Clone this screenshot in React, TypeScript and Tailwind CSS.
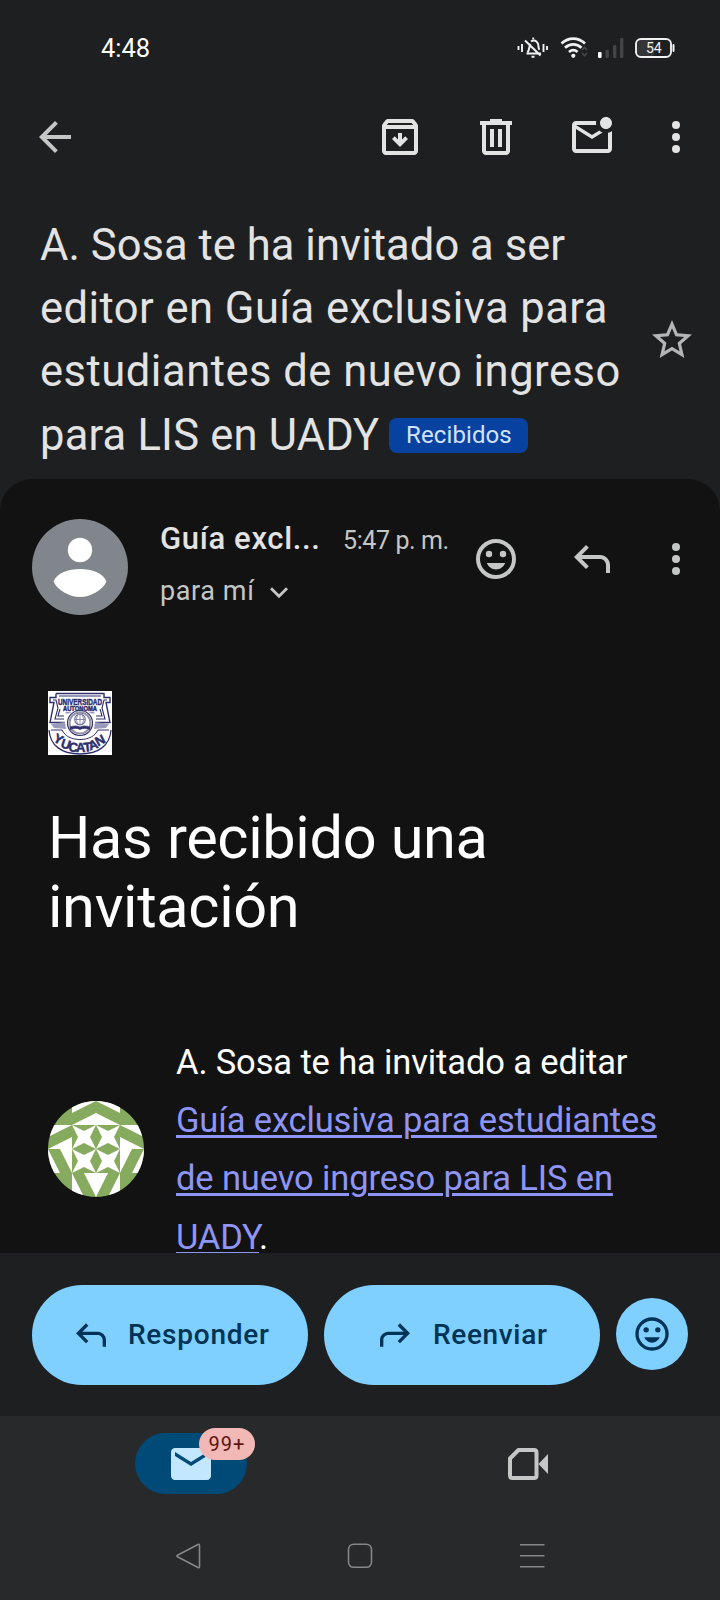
import React from "react";

type IconProps = { d?: string; className?: string; children?: React.ReactNode };

function Icon({ d, className = "size-12", children }: IconProps) {
  return (
    <svg viewBox="0 0 24 24" className={`shrink-0 ${className}`} fill="currentColor">
      {d ? <path d={d} fillRule="evenodd" /> : null}
      {children}
    </svg>
  );
}

const paths = {
  back: "M20 11H7.83l5.59-5.59L12 4l-8 8 8 8 1.410-1.410L7.830 13H20z",
  archive:
    "M20.54 5.23l-1.39-1.68C18.88 3.21 18.47 3 18 3H6c-.47 0-.88.21-1.16.55L3.46 5.23C3.17 5.57 3 6.02 3 6.5V19c0 1.1.9 2 2 2h14c1.1 0 2-.9 2-2V6.500c0-.48-.17-.93-.46-1.270zM6.240 5h11.520l.830 1H5.420l.820-1zM5 19V8h14v11H5zm6-9v3.200l-1.600-1.600L8 13l4 4 4-4-1.400-1.400-1.600 1.600V10z",
  trash:
    "M9 3v1H4v2h1v13c0 1.100.9 2 2 2h10c1.100 0 2-.9 2-2V6h1V4h-5V3H9zM7 6h10v13H7V6zm2 2v9h2V8H9zm4 0v9h2V8h-2z",
  unread:
    "M22 8.980V18c0 1.100-.9 2-2 2H4c-1.100 0-2-.9-2-2V6c0-1.100.9-2 2-2h10.100c-.06.320-.1.660-.1 1s.04.680.1 1H4l8 5 3.670-2.290c.470.430 1.020.760 1.630.980L12 13 4 8v10h16V9.900c.740-.150 1.420-.480 2-.920zM16 5c0 1.660 1.340 3 3 3s3-1.340 3-3-1.340-3-3-3-3 1.340-3 3z",
  star:
    "M22 9.240l-7.190-.620L12 2 9.190 8.630 2 9.240l5.460 4.730L5.820 21 12 17.270 18.180 21l-1.630-7.030L22 9.240zM12 15.400l-3.760 2.270 1-4.280-3.320-2.880 4.380-.380L12 6.100l1.710 4.040 4.380.380-3.320 2.880 1 4.280L12 15.400z",
  reply: "M19 19v-4c0-1.660-1.340-3-3-3H6.830l3.580 3.590L9 17l-6-6 6-6 1.410 1.410L6.830 10H16c2.760 0 5 2.240 5 5v4z",
  mail: "M20 4H4c-1.100 0-2 .9-2 2v12c0 1.100.9 2 2 2h16c1.100 0 2-.9 2-2V6c0-1.100-.9-2-2-2zm0 4l-8 5-8-5V6l8 5 8-5v2z",
};

function Dots() {
  return (
    <Icon>
      <circle cx="12" cy="6" r="2" />
      <circle cx="12" cy="12" r="2" />
      <circle cx="12" cy="18" r="2" />
    </Icon>
  );
}

function Smile({ className }: { className?: string }) {
  return (
    <Icon className={className}>
      <circle cx="12" cy="12" r="9" fill="none" stroke="currentColor" strokeWidth="2" />
      <circle cx="8.500" cy="9.500" r="1.600" />
      <circle cx="15.500" cy="9.500" r="1.600" />
      <path d="M7.400 14h9.200c-.7 1.900-2.500 3.200-4.600 3.200S8.100 15.900 7.400 14z" />
    </Icon>
  );
}

function StatusIcons() {
  return (
    <svg viewBox="0 0 166 28" className="h-7 w-[166px]" fill="none" stroke="#f1f1f1">
      <g strokeWidth="2">
        <path d="M2.500 12v4M6 10v8M27.500 10v8M31 12v4" strokeWidth="1.900" />
        <path d="M10.500 19.500h14.500M11.500 18.500c2-2 1.500-6.500 3-8.500M15 7.300c4.500-2.300 7.500 1 7.500 5 0 1.500.3 2.600.8 3.600M9 6.500l15.500 15" />
        <path d="M16.300 4.500h1.800M15.500 22.800h3" />
      </g>
      <g strokeWidth="2.800">
        <path d="M45.500 9.500c7-6.500 16.500-6.500 23.500 0" />
        <path d="M49 13.800c5-4.500 11.500-4.500 16.500 0" />
        <path d="M53 18c2.800-2.300 6-2.300 8.500 0" />
        <circle cx="57.300" cy="21.800" r="2.100" fill="#f1f1f1" stroke="none" />
      </g>
      <path d="M66 16l2.500-2.800 2.500 2.800M66 19l2.500 2.800 2.500-2.800" stroke="#4a4b4c" strokeWidth="1.400" />
      <g stroke="none">
        <rect x="82" y="18" width="3.600" height="6" rx="1" fill="#fff" />
        <rect x="89.500" y="16" width="3.400" height="8" rx="1" fill="#434445" />
        <rect x="97" y="11" width="3.400" height="13" rx="1" fill="#434445" />
        <rect x="104" y="4" width="3.400" height="20" rx="1" fill="#434445" />
        <rect x="120" y="5" width="18" height="18" rx="4" fill="#343536" />
        <rect x="156.500" y="10" width="2" height="8" rx="1" fill="#f1f1f1" />
      </g>
      <rect x="120" y="5" width="35" height="18" rx="5" strokeWidth="1.900" />
      <text x="130" y="18.800" fontFamily="Roboto, sans-serif" fontSize="14" textLength="15.500" fill="#f1f1f1" stroke="none">
        54
      </text>
    </svg>
  );
}

function UniversityCrest() {
  const navy = "#2f2f6d";
  return (
    <svg viewBox="0 0 64 64" className="size-16" fill="none" stroke={navy}>
      <rect width="64" height="64" fill="#fff" stroke="none" />
      <path d="M8 2.500h48v4h6v5h-4l4 20H47M8 2.500v4H2v5h4l-4 20h15" strokeWidth="1.400" />
      <path d="M11 5h42M5 9h3l2 8-3 11h9M59 9h-3l-2 8 3 11h-9M12 18l-2 7h6M52 18l2 7h-6" strokeWidth="1.100" />
      <g fill="#9a9abb" stroke="none">
        <path d="M3 33l14-2 1 7-12-1zM61 33l-14-2-1 7 12-1zM19 23l5-2h-7zM45 23l-5-2h7z" />
      </g>
      <circle cx="32" cy="32" r="12.500" fill="#fff" strokeWidth="1.200" />
      <circle cx="32" cy="32" r="10.500" stroke="#9595a8" strokeWidth="2" />
      <circle cx="32" cy="28.500" r="5.300" stroke="#77779d" strokeWidth="1.200" />
      <path d="M27 28.500h10M32 23.500v10M30 24c-2 3-2 6 0 9M34 24c2 3 2 6 0 9" stroke="#77779d" strokeWidth=".8" />
      <path d="M22 36c4-1.500 7-1.500 10 0 3-1.500 6-1.500 10 0v2.500c-4-1.500-7-1.500-10 0-3-1.500-6-1.500-10 0z" fill={navy} strokeWidth=".6" />
      <path d="M1 39c1 15 12 24 31 24s30-9 31-24" strokeWidth="1.300" />
      <path d="M3 39h11c3 6 9 9.500 18 9.500S47 45 50 39h11" strokeWidth="1" />
      <g fill={navy} stroke={navy} strokeWidth=".5" fontFamily="Liberation Sans, sans-serif" fontWeight="700">
        <text x="10" y="13.500" fontSize="9.500" textLength="44" lengthAdjust="spacingAndGlyphs">UNIVERSIDAD</text>
        <text x="15" y="19.500" fontSize="7" textLength="34" lengthAdjust="spacingAndGlyphs">AUTONOMA</text>
        <text fontSize="13" x="4.500 12 20 28 36 42 50" y="50 56 60 61 61 59.500 55.500" rotate="28 18 8 0 -6 -18 -28">YUCATAN</text>
      </g>
    </svg>
  );
}

function Identicon() {
  const star = "M0 0l12 6 12-6-6 12 6 12-12-6-12 6 6-12z";
  const slope = "M0 0h24L0 12zM24 12v12H0z";
  const steep = "M0 0l12 24H0zM12 0h12v24z";
  const half = (
    <>
      <path d={star} transform="translate(24 24)" />
      <path d={star} transform="translate(24 48)" />
      <path d={slope} transform="translate(24 0)" />
      <path d={slope} transform="translate(0 24)" />
      <path d={steep} transform="translate(0 48)" />
      <path d={steep} transform="translate(24 72)" />
    </>
  );
  return (
    <svg viewBox="0 0 96 96" className="size-24 shrink-0 rounded-full bg-[#87ab5e]" fill="#fff">
      {half}
      <g transform="matrix(-1 0 0 1 96 0)">{half}</g>
    </svg>
  );
}

function ReplyButton({ label, flip }: { label: string; flip?: boolean }) {
  return (
    <button
      className={`flex h-[100px] w-[276px] items-center rounded-[50px] bg-[#7fcfff] text-[28px] font-medium text-[#003355] ${
        flip ? "pl-[51px]" : "pl-[39px]"
      }`}
    >
      <Icon d={paths.reply} className={flip ? "size-10 -scale-x-100" : "size-10"} />
      <span className={flip ? "ml-[18px] tracking-[0.650px]" : "ml-[17px] tracking-[0.750px]"}>{label}</span>
    </button>
  );
}

export default function App() {
  return (
    <div className="flex h-[1600px] w-[720px] flex-col overflow-hidden bg-[#1e1f20] font-['Roboto',sans-serif] text-[#e3e3e3]">
      <div className="flex h-24 shrink-0 items-center justify-between pr-[38px] pl-[101px]">
        <span className="pt-px text-[25.500px] text-white">4:48</span>
        <StatusIcons />
      </div>

      <header className="flex h-[82px] shrink-0 items-center pr-5 pl-[31px]">
        <Icon d={paths.back} className="size-12 text-[#c4c7c5]" />
        <div className="ml-auto flex items-center gap-12">
          <Icon d={paths.archive} />
          <Icon d={paths.trash} />
          <Icon d={paths.unread} />
        </div>
        <div className="ml-9 flex">
          <Dots />
        </div>
      </header>

      <section className="flex h-[301px] shrink-0 items-start justify-between pr-6 pl-10">
        <h1 className="pt-[36px] text-[43.500px] leading-[63.200px] whitespace-nowrap">
          <span className="block tracking-[0.050px]">A. Sosa te ha invitado a ser</span>
          <span className="block tracking-[0.460px]">editor en Guía exclusiva para</span>
          <span className="block tracking-[0.520px]">estudiantes de nuevo ingreso</span>
          <span className="flex items-center">
            <span className="tracking-[0.210px]">para LIS en UADY</span>
            <span className="ml-[10px] flex h-[35px] w-[139px] items-center justify-center rounded-lg bg-[#0842a0] text-2xl tracking-[0.100px] text-[#d3e3fd]">
              Recibidos
            </span>
          </span>
        </h1>
        <Icon d={paths.star} className="mt-[138px] size-12 text-[#b4b6b5]" />
      </section>

      <main className="h-[774px] shrink-0 overflow-hidden rounded-t-[32px] bg-[#121212]">
        <div className="flex pt-10 pr-5 pl-8">
          <svg viewBox="0 0 96 96" className="size-24 shrink-0 rounded-full bg-[#80868b]" fill="#fff">
            <circle cx="48" cy="31" r="12.200" />
            <path d="M21.500 62.500C25 54 36 50 48 50s23 4 26.500 12.500C70 72 58 78 48 78s-22-6-26.500-15.500z" />
          </svg>
          <div className="ml-8 w-[291px] shrink-0 whitespace-nowrap">
            <div className="flex items-baseline pt-px">
              <span className="w-[183px] text-[31px] leading-[38px] font-medium tracking-[0.650px]">Guía excl...</span>
              <span className="text-[25px] tracking-[-0.400px] text-[#c4c7c5]">5:47 p. m.</span>
            </div>
            <div className="mt-3 flex items-center text-[27px] leading-[38px] text-[#c4c7c5]">
              <span className="tracking-[0.600px]">para mí</span>
              <svg viewBox="0 0 18 11" className="mt-1 ml-4 h-[11px] w-[18px]" fill="none" stroke="currentColor" strokeWidth="2.800">
                <path d="M1 1.300l8 8 8-8" />
              </svg>
            </div>
          </div>
          <div className="ml-auto flex pt-4 text-[#c4c7c5]">
            <Smile />
            <Icon d={paths.reply} className="ml-12 size-12" />
            <div className="ml-9">
              <Dots />
            </div>
          </div>
        </div>

        <div className="px-12 pt-[76px] text-white">
          <UniversityCrest />
          <h2 className="mt-[49px] text-[59.500px] leading-[68.500px] tracking-[-0.350px] whitespace-nowrap">
            Has recibido una
            <br />
            invitación
          </h2>
          <div className="mt-[92px] flex whitespace-nowrap">
            <div className="pt-[68px]">
              <Identicon />
            </div>
            <p className="ml-8 text-[34.500px] leading-[58.200px] tracking-[-0.130px]">
              A. Sosa te ha invitado a editar
              <br />
              <a className="text-[#8f94f7] underline decoration-[3px] underline-offset-[3px]">
                Guía exclusiva para estudiantes
                <br />
                de nuevo ingreso para LIS en
                <br />
                UADY
              </a>
              .
            </p>
          </div>
        </div>
      </main>

      <div className="flex h-[163px] shrink-0 items-start gap-4 px-8 pt-8">
        <ReplyButton label="Responder" />
        <ReplyButton label="Reenviar" flip />
        <button className="mt-[13px] flex size-[72px] items-center justify-center rounded-full bg-[#7fcfff] text-[#003355]">
          <Smile className="size-10" />
        </button>
      </div>

      <nav className="h-[184px] shrink-0 bg-[#28292a]">
        <div className="flex pt-[17px] pl-[135px]">
          <div className="relative flex h-[61px] w-28 items-center justify-center rounded-full bg-[#004a77] text-[#c2e7ff]">
            <Icon d={paths.mail} />
            <span className="absolute -top-[5px] left-16 flex h-8 w-14 items-center justify-center rounded-full bg-[#f2b8b5] text-[20px] tracking-[1px] text-[#601410]">
              99+
            </span>
          </div>
          <div className="ml-[257px] pt-[7px] text-[#c4c7c5]">
            <svg viewBox="0 0 48 48" className="size-12" fill="none" stroke="currentColor" strokeWidth="4">
              <path d="M14.500 10H30q2.500 0 2.500 2.500V35.500Q32.500 38 30 38H8.500Q6 38 6 35.500V18.500z" strokeLinejoin="round" />
              <path d="M34.500 24l9.500-10v20z" fill="currentColor" stroke="none" />
            </svg>
          </div>
        </div>
        <div className="mt-[49px] flex pl-[176px]">
          <svg viewBox="0 0 370 26" className="h-[26px] w-[370px]" fill="none" stroke="#858687" strokeWidth="1.600">
            <path d="M22 1.500q1.500-.8 1.500 1v21q0 1.800-1.500 1L1.500 13.800q-1.200-.8 0-1.600z" />
            <rect x="172.500" y="1.300" width="23" height="23" rx="5" />
            <path d="M344 1.700h24.500M344 12.800h24.500M344 23.800h24.500" />
          </svg>
        </div>
      </nav>
    </div>
  );
}
